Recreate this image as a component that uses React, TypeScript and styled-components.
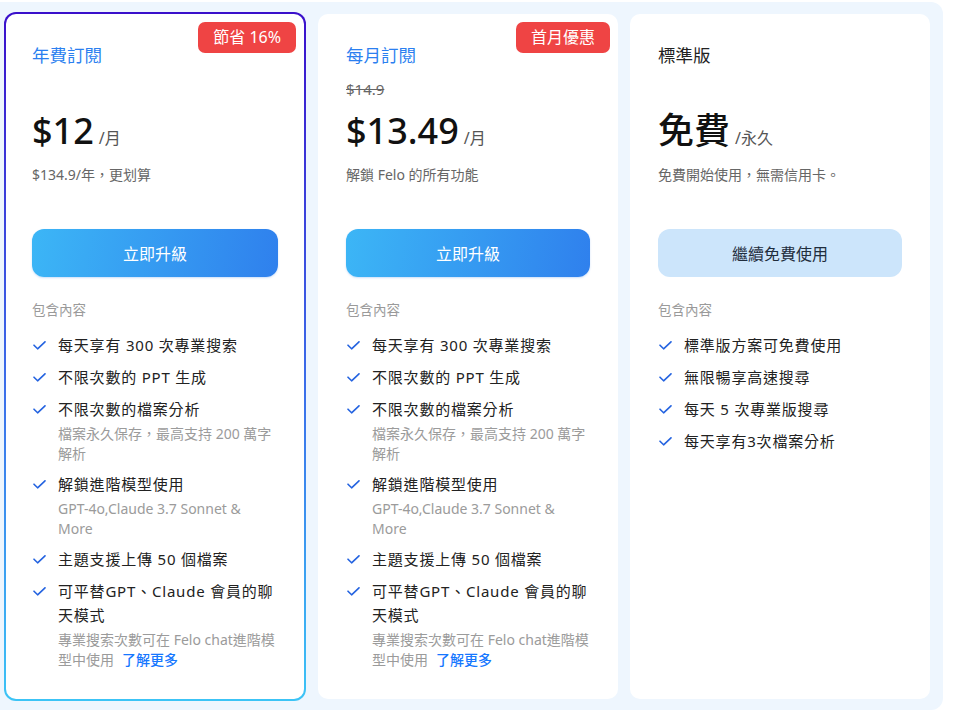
import React from "react";
import styled, { createGlobalStyle, css } from "styled-components";

const Global = createGlobalStyle`
  html, body { margin: 0; padding: 0; background: #ffffff; }
  body { font-family: "Noto Sans", "Noto Sans CJK TC", sans-serif; color: #222; }
  * { box-sizing: border-box; }
`;

const Panel = styled.div`
  margin-top: 2px;
  width: 943px;
  padding: 12px 13px 12px 4px;
  background: #eef6fe;
  border-radius: 0 12px 12px 0;
  display: grid;
  grid-template-columns: 302px 300px 300px;
  column-gap: 12px;
  height: 708px;
`;

const Card = styled.div<{ $featured?: boolean }>`
  position: relative;
  background: #ffffff;
  border-radius: 10px;
  padding: 29px 28px;
  display: flex;
  flex-direction: column;
  ${(p) =>
    p.$featured &&
    css`
      margin: -2px 0;
      padding: 29px 26px;
      border: 2px solid transparent;
      border-radius: 12px;
      background: linear-gradient(#fff, #fff) padding-box,
        linear-gradient(to bottom, #3a0fcb 0%, #3b6fea 55%, #3cc4f6 100%) border-box;
    `}
`;

const Badge = styled.div`
  position: absolute;
  top: 8px;
  right: 8px;
  height: 31px;
  padding: 0 15px;
  background: #ef4444;
  color: #fff;
  border-radius: 7px;
  font-size: 16px;
  line-height: 31px;
`;

const Title = styled.div<{ $accent?: boolean }>`
  font-size: 17.5px;
  line-height: 24px;
  color: ${(p) => (p.$accent ? "#2b7ff0" : "#222")};
`;

const StrikeSlot = styled.div`
  height: 20px;
  margin-top: 12px;
  font-size: 15px;
  line-height: 20px;
  color: #666;
  text-decoration: line-through;
`;

const PriceRow = styled.div`
  margin-top: 8px;
  display: flex;
  align-items: baseline;
  height: 48px;
  line-height: 48px;
`;

const Price = styled.span`
  font-size: 36px;
  font-weight: 500;
  color: #111;
`;

const Per = styled.span`
  font-size: 16px;
  color: #555;
  margin-left: 5px;
`;

const Note = styled.div`
  margin-top: 10px;
  font-size: 14px;
  line-height: 20px;
  color: #666;
`;

const ActionButton = styled.button<{ $variant: "primary" | "soft" }>`
  margin-top: 44px;
  height: 48px;
  width: 100%;
  border: none;
  border-radius: 12px;
  font-family: inherit;
  font-size: 16px;
  cursor: pointer;
  ${(p) =>
    p.$variant === "primary"
      ? css`
          color: #fff;
          background: linear-gradient(100deg, #3cb6f6 0%, #2f80ed 100%);
          box-shadow: 0 1px 2px rgba(47, 128, 237, 0.25);
        `
      : css`
          color: #1f2d3d;
          background: #cce5fb;
        `}
`;

const SectionLabel = styled.div`
  margin-top: 23px;
  font-size: 13.5px;
  line-height: 20px;
  color: #9a9a9a;
`;

const FeatureList = styled.ul`
  list-style: none;
  margin: 13px 0 0;
  padding: 0;
  display: flex;
  flex-direction: column;
  gap: 8px;
`;

const Feature = styled.li`
  display: grid;
  grid-template-columns: 13px 1fr;
  column-gap: 12px;
  padding-left: 1px;
`;

const CheckBox = styled.span`
  height: 24px;
  display: flex;
  align-items: center;
`;

const FeatureBody = styled.div`
  display: flex;
  flex-direction: column;
`;

const FeatureText = styled.div`
  font-size: 15px;
  line-height: 24px;
  letter-spacing: 0.8px;
  color: #222;
`;

const FeatureSub = styled.div`
  margin-top: 3px;
  font-size: 14px;
  line-height: 20px;
  color: #9b9b9b;
`;

const MoreLink = styled.a`
  color: #1677ff;
  margin-left: 8px;
  text-decoration: none;
  font-weight: 500;
`;

const CheckIcon = () => (
  <svg width="13" height="9" viewBox="0 0 13 9" fill="none">
    <path d="M1 4.2 L4.6 7.8 L12 0.8" stroke="#2463e0" strokeWidth="1.6" strokeLinecap="round" strokeLinejoin="round" />
  </svg>
);

type Item = { text: React.ReactNode; sub?: React.ReactNode };

const FeatureItems = ({ items }: { items: Item[] }) => (
  <FeatureList>
    {items.map((it, i) => (
      <Feature key={i}>
        <CheckBox>
          <CheckIcon />
        </CheckBox>
        <FeatureBody>
          <FeatureText>{it.text}</FeatureText>
          {it.sub && <FeatureSub>{it.sub}</FeatureSub>}
        </FeatureBody>
      </Feature>
    ))}
  </FeatureList>
);

const proItems: Item[] = [
  { text: "每天享有 300 次專業搜索" },
  { text: "不限次數的 PPT 生成" },
  { text: "不限次數的檔案分析", sub: "檔案永久保存，最高支持 200 萬字解析" },
  { text: "解鎖進階模型使用", sub: "GPT-4o,Claude 3.7 Sonnet & More" },
  { text: "主題支援上傳 50 個檔案" },
  {
    text: "可平替GPT、Claude 會員的聊天模式",
    sub: (
      <>
        <span>專業搜索次數可在 Felo chat進階模型中使用</span>
        <MoreLink href="#">了解更多</MoreLink>
      </>
    ),
  },
];

const freeItems: Item[] = [
  { text: "標準版方案可免費使用" },
  { text: "無限暢享高速搜尋" },
  { text: "每天 5 次專業版搜尋" },
  { text: "每天享有3次檔案分析" },
];

export default function App() {
  return (
    <>
      <Global />
      <Panel>
        <Card $featured>
          <Badge>節省 16%</Badge>
          <Title $accent>年費訂閱</Title>
          <StrikeSlot />
          <PriceRow>
            <Price>$12</Price>
            <Per>/月</Per>
          </PriceRow>
          <Note>$134.9/年，更划算</Note>
          <ActionButton $variant="primary">立即升級</ActionButton>
          <SectionLabel>包含內容</SectionLabel>
          <FeatureItems items={proItems} />
        </Card>
        <Card>
          <Badge>首月優惠</Badge>
          <Title $accent>每月訂閱</Title>
          <StrikeSlot>$14.9</StrikeSlot>
          <PriceRow>
            <Price>$13.49</Price>
            <Per>/月</Per>
          </PriceRow>
          <Note>解鎖 Felo 的所有功能</Note>
          <ActionButton $variant="primary">立即升級</ActionButton>
          <SectionLabel>包含內容</SectionLabel>
          <FeatureItems items={proItems} />
        </Card>
        <Card>
          <Title>標準版</Title>
          <StrikeSlot />
          <PriceRow>
            <Price>免費</Price>
            <Per>/永久</Per>
          </PriceRow>
          <Note>免費開始使用，無需信用卡。</Note>
          <ActionButton $variant="soft">繼續免費使用</ActionButton>
          <SectionLabel>包含內容</SectionLabel>
          <FeatureItems items={freeItems} />
        </Card>
      </Panel>
    </>
  );
}
